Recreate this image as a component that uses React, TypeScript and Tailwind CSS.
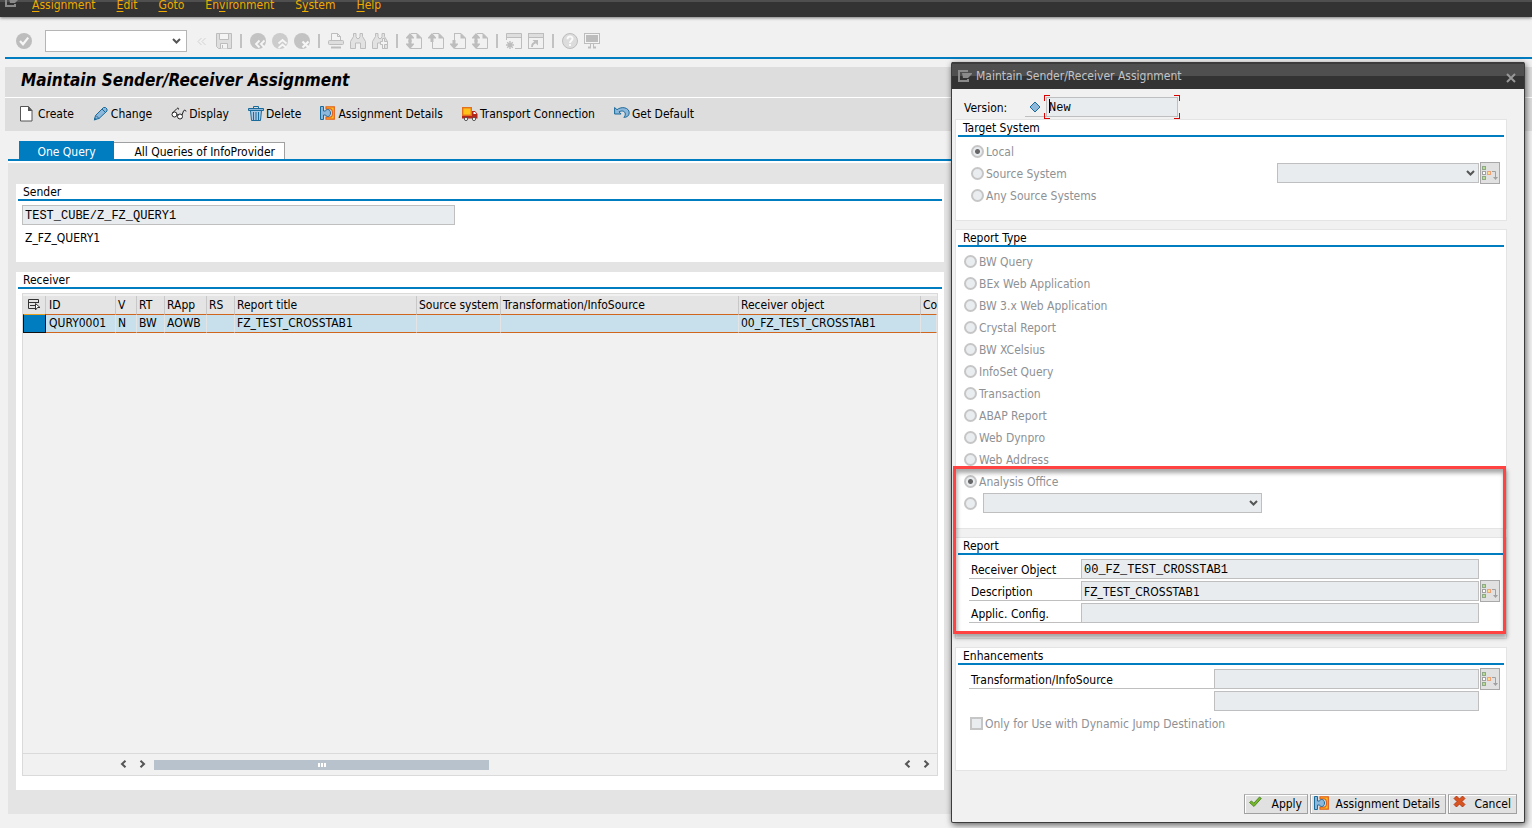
import React from "react";
import clsx from "clsx";

const MENUS = ["Assignment", "Edit", "Goto", "Environment", "System", "Help"];
const UNDERLINED = [0, 0, 0, 2, 1, 0];

const REPORT_TYPES = [
  "BW Query",
  "BEx Web Application",
  "BW 3.x Web Application",
  "Crystal Report",
  "BW XCelsius",
  "InfoSet Query",
  "Transaction",
  "ABAP Report",
  "Web Dynpro",
  "Web Address",
  "Analysis Office",
];

const COLUMNS = [
  { title: "ID", value: "QURY0001", width: "w-[70px]" },
  { title: "V", value: "N", width: "w-[21px]" },
  { title: "RT", value: "BW", width: "w-[28px]" },
  { title: "RApp", value: "AOWB", width: "w-[42px]" },
  { title: "RS", value: "", width: "w-[28px]" },
  { title: "Report title", value: "FZ_TEST_CROSSTAB1", width: "w-[182px]" },
  { title: "Source system", value: "", width: "w-[84px]" },
  { title: "Transformation/InfoSource", value: "", width: "w-[238px]" },
  { title: "Receiver object", value: "00_FZ_TEST_CROSSTAB1", width: "w-[182px]" },
  { title: "Co", value: "", width: "" },
];

const Icon = ({ children, className }: { children: React.ReactNode; className?: string }) => (
  <svg viewBox="0 0 16 16" className={clsx("w-4 h-4 shrink-0", className)} fill="none" aria-hidden="true">
    {children}
  </svg>
);

/* ---------- system toolbar icons ---------- */

const GREY = "#bdbdbd";

const CheckIcon = () => (
  <Icon>
    <circle cx="8" cy="8" r="8" fill={GREY} />
    <path d="M4 8l3 3.2 5.2-6.6" stroke="#f6f6f6" strokeWidth="2.2" />
  </Icon>
);

const SaveIcon = () => (
  <Icon>
    <path d="M.5.5h15v15H2.5l-2-2z" stroke={GREY} fill="#dedede" />
    <path d="M3.5.5h9v6h-9z" fill="#f4f4f4" stroke={GREY} />
    <path d="M4.5 15.5v-5h7v5" fill="#f4f4f4" stroke={GREY} />
    <path d="M6.5 12v3" stroke={GREY} />
  </Icon>
);

const BackIcon = () => (
  <Icon>
    <circle cx="8" cy="8" r="8" fill="#c3c3c3" />
    <path d="M9.5 7.5L6 11l3.5 3.5M14.5 7.5L11 11l3.5 3.5" stroke="#f6f6f6" strokeWidth="1.8" />
  </Icon>
);

const ExitIcon = () => (
  <Icon>
    <circle cx="8" cy="8" r="8" fill="#cccccc" />
    <path d="M6.5 10.5L10.5 7l4 3.5M6.5 15l4-3.5 4 3.5" stroke="#f6f6f6" strokeWidth="1.8" />
  </Icon>
);

const CancelCircleIcon = () => (
  <Icon>
    <circle cx="8" cy="8" r="8" fill="#c3c3c3" />
    <path d="M8.5 8.5l6 6M14.5 8.5l-6 6" stroke="#f6f6f6" strokeWidth="2.2" />
  </Icon>
);

const PrintIcon = () => (
  <Icon>
    <path d="M3.5 8V.5h6l3 3V8" fill="#f4f4f4" stroke={GREY} />
    <path d="M9.5.5v3h3" stroke={GREY} />
    <rect x=".5" y="7.5" width="15" height="4" rx="1" fill="#dedede" stroke={GREY} />
    <path d="M3 14.500h10" stroke={GREY} strokeWidth="2" />
  </Icon>
);

const FindIcon = ({ more }: { more?: boolean }) => (
  <Icon>
    <path
      d="M3.500 .5h2.500v3l1 2h2l1-2v-3h2.500v3l3 5v7h-5V10H5.500v5.500h-5v-7l3-5z"
      fill="#e2e2e2"
      stroke={GREY}
    />
    {more && (
      <path d="M10.500 5.500h2v3h3v3h-3v4h-2v-4h-2v-3h2z" fill="#f4f4f4" stroke={GREY} />
    )}
  </Icon>
);

const PageIcon = ({ up, down }: { up?: boolean; down?: boolean }) => (
  <Icon>
    <path d="M4.500 9v6.500h11V5L11 .5H5" stroke={GREY} />
    {down && !up && <path d="M4.500 0v9" stroke={GREY} />}
    <path d="M10.500 0v5.500H16z" fill={GREY} />
    {up && <path d="M4 0l4 4.500v1H5.500V9h-3V5.500H0v-1z" fill={GREY} />}
    {down && <path d="M4 16l4-4.500v-1H5.500V7h-3v3.500H0v1z" fill={GREY} />}
  </Icon>
);

const SessionIcon = () => (
  <Icon>
    <path d="M.5 7V.5h15v15H9" stroke={GREY} />
    <path d="M1 1h14v3H1z" fill="#dedede" />
    <path d="M.5 4.500h15" stroke={GREY} />
    <path d="M4 8v8M0 12h8M1.200 9.200l5.600 5.600M6.800 9.200l-5.600 5.600" stroke={GREY} strokeWidth="1.400" />
  </Icon>
);

const ShortcutIcon = () => (
  <Icon>
    <rect x=".5" y=".5" width="15" height="15" stroke={GREY} />
    <path d="M1 1h14v3H1z" fill="#dedede" />
    <path d="M.5 4.500h15" stroke={GREY} />
    <path d="M4 14c0-2.500 1-4 3.500-4.500" stroke={GREY} strokeWidth="1.800" />
    <path d="M4.500 7H10v5.500z" fill={GREY} />
  </Icon>
);

const HelpIcon = () => (
  <Icon>
    <circle cx="8" cy="8" r="7.500" fill="#dcdcdc" stroke={GREY} />
    <path d="M5.500 6.200c0-3.600 5-3.400 5-.5C10.500 7.600 8 7.800 8 10" stroke="#fafafa" strokeWidth="2" />
    <rect x="7" y="11" width="2" height="2" fill="#fafafa" />
  </Icon>
);

const MonitorIcon = () => (
  <Icon>
    <rect x=".5" y=".5" width="15" height="10" fill="#f4f4f4" stroke={GREY} />
    <rect x="2" y="2" width="12" height="7" fill={GREY} />
    <path d="M6.500 11v3M9.500 11v3" stroke={GREY} />
    <path d="M4 14.500h3M9 14.500h3" stroke={GREY} strokeWidth="2" />
  </Icon>
);

/* ---------- application toolbar icons ---------- */

const CreateIcon = () => (
  <Icon>
    <path d="M.5.5h8l3.500 4v10.500H.5z" fill="#fff" stroke="#555" />
    <path d="M8 0v5h4.500z" fill="#555" />
  </Icon>
);

const ChangeIcon = () => (
  <Icon>
    <path d="M1.500 13.500l1-4L10.500 1.500h2l1.500 1.500v2L6 12.500z" fill="#8db8dc" stroke="#1a6a9a" />
    <path d="M3 9.500l3 3M9 3l3.500 3.500" stroke="#1a6a9a" />
    <path d="M.8 14.500l.8-3 2.200 2.200z" fill="#1a6a9a" />
  </Icon>
);

const DisplayIcon = () => (
  <Icon>
    <circle cx="3.500" cy="8.500" r="2.500" stroke="#222" fill="#fff" />
    <circle cx="9" cy="10.500" r="2.500" stroke="#222" fill="#fff" />
    <path d="M5.500 8l1.500 1.500M1.500 7L6 2.500c1-.9 2-.3 1.500 1M11 9l1.500-4c.6-1.500 2.500-1 2.500.5" stroke="#222" />
  </Icon>
);

const TrashIcon = () => (
  <Icon>
    <path d="M2.500 4.500h11l-1 10h-9z" fill="#a8c8e4" stroke="#1a6a9a" />
    <path d="M.5 2.500h15v2H.5z" fill="#8db8dc" stroke="#1a6a9a" />
    <path d="M5.500 2.500v-2h5v2" stroke="#1a6a9a" />
    <path d="M5.500 6v8M8 6v8M10.500 6v8" stroke="#1a6a9a" />
  </Icon>
);

const AssignmentIcon = () => (
  <Icon>
    <path d="M6 .8h8.300v12.400H6v-2h4.200c1.500 0 2.300-2 2.300-4.200s-.8-4.200-2.300-4.200H6z" fill="#ffc21a" stroke="#e2601c" strokeWidth="1.200" />
    <path
      d="M.5.500h3v4.500h2c.3-.9 1.100-1.500 2.200-1.500 1.700 0 2.800 1.400 2.800 3.500s-1.100 3.500-2.800 3.500c-1.100 0-1.900-.6-2.200-1.500h-2v4.500h-3z"
      fill="#8db8dc"
      stroke="#1a6a9a"
    />
  </Icon>
);

const TransportIcon = () => (
  <Icon>
    <rect x=".7" y="1.700" width="8.600" height="7.600" fill="#ffc21a" stroke="#e2701c" strokeWidth="1.400" />
    <path d="M10 5h3l2.500 3v4.500H10z" fill="#b3261c" />
    <path d="M11.500 6h1.500l1.300 2h-2.800z" fill="#fff" />
    <path d="M0 10h11v2.500H0z" fill="#b3261c" />
    <circle cx="4" cy="13" r="1.600" fill="#fff" stroke="#555" />
    <circle cx="12" cy="13" r="1.600" fill="#fff" stroke="#555" />
  </Icon>
);

const UndoIcon = () => (
  <Icon>
    <path
      d="M.6 1.500v6.500h6.500L5 5.900C8 4 11.300 5.200 11.300 8c0 1.400-.5 2.400-1.500 3.300 3 .2 5.400-1.500 5.400-4.500C15.200 1.500 7.500 0 3 3.700z"
      fill="#8db8dc"
      stroke="#1a6a9a"
    />
  </Icon>
);

const ApplyIcon = () => (
  <Icon className="mb-1">
    <path d="M1.500 8.500l2-1.600 2.300 2.300L11.500 3l1.800 1.400-7.300 8.100z" fill="#76b82a" stroke="#3d7a14" strokeWidth=".8" />
  </Icon>
);

const CloseRedIcon = () => (
  <Icon className="mb-1">
    <path
      d="M2 4.500L4.500 2 7.500 5l3-3L13 4.500 10 7.500l3 3-2.500 2.500-3-3-3 3L2 10.500l3-3z"
      fill="#d9531e"
      stroke="#a8300f"
      strokeWidth=".8"
    />
  </Icon>
);

const LogoIcon = () => (
  <svg viewBox="0 0 14 12" className="w-[14px] h-3 shrink-0" fill="none" aria-hidden="true">
    <path d="M10 1H1v10h9V9" stroke="#8a8a8a" strokeWidth="2" />
    <path d="M4 3h11l-5 5H5z" fill="#8a8a8a" />
  </svg>
);

const Chevron = ({ className }: { className?: string }) => (
  <svg
    viewBox="0 0 9 6"
    className={clsx("absolute top-1/2 -translate-y-1/2 w-[9px] h-[6px] pointer-events-none", className)}
    fill="none"
    aria-hidden="true"
  >
    <path d="M1 1l3.500 3.500L8 1" stroke="#555" strokeWidth="2" />
  </svg>
);

/* ---------- controls ---------- */

const ToolButton = ({ label, children }: { label: string; children: React.ReactNode }) => (
  <button type="button" aria-label={label} className="shrink-0">
    {children}
  </button>
);

const Separator = () => <span className="w-[2px] h-[14px] mx-[2px] bg-[#c2c2c2]" aria-hidden="true" />;

const AppButton = ({ label, icon }: { label: string; icon: React.ReactNode }) => (
  <button type="button" className="flex items-center gap-[2px] whitespace-nowrap">
    {icon}
    {label}
  </button>
);

const FooterButton = ({ label, icon, className }: { label: string; icon: React.ReactNode; className: string }) => (
  <button
    type="button"
    className={clsx(
      "h-5 pl-[3px] pr-[5px] flex items-center justify-between border border-[#a0a0a0] border-t-[#b8b8b8] bg-[#e1e1e1] shadow-[inset_1px_1px_0_#fff] whitespace-nowrap",
      className,
    )}
  >
    {icon}
    {label}
  </button>
);

const Radio = ({ label, name, checked }: { label: string; name: string; checked?: boolean }) => (
  <label className="h-[22px] flex items-center gap-[2px] text-[#8e9194]">
    <input
      type="radio"
      name={name}
      defaultChecked={checked}
      disabled
      className="appearance-none w-[13px] h-[13px] rounded-full border-2 border-[#c6c6c6] bg-[#e9edf0] checked:bg-[radial-gradient(circle,#666_2px,#e9edf0_3px)]"
    />
    <span className="pt-[2px]">{label}</span>
  </label>
);

const Field = ({ className, ...props }: React.InputHTMLAttributes<HTMLInputElement>) => (
  <input
    type="text"
    readOnly
    className={clsx("h-5 px-[2px] pt-[2px] min-w-0 border border-[#bfbfbf] bg-[#e8ecef] text-black outline-none", className)}
    {...props}
  />
);

const DisabledSelect = ({ label, className }: { label: string; className: string }) => (
  <div className={clsx("relative h-5", className)}>
    <select
      aria-label={label}
      disabled
      className="block appearance-none w-full h-5 border border-[#bfbfbf] bg-[#e8ecef] opacity-100"
    />
    <Chevron className="right-1" />
  </div>
);

const MultiButton = ({ label }: { label: string }) => (
  <button
    type="button"
    aria-label={label}
    className="w-5 h-[22px] shrink-0 border border-[#a8a8a8] bg-[#e1e1e1] flex items-center justify-center"
  >
    <svg viewBox="0 0 18 16" className="w-[18px] h-4" fill="none" aria-hidden="true">
      <rect x="1.500" y="1.500" width="3" height="3" fill="#b5dc8c" stroke="#8fa88a" />
      <rect x="1.500" y="6.500" width="3" height="3" fill="#fff" stroke="#a0a0a0" />
      <rect x="1.500" y="11.500" width="3" height="3" fill="#b5dc8c" stroke="#8fa88a" />
      <rect x="6.500" y="6.500" width="3" height="3" fill="#ffe08a" stroke="#eea27a" />
      <path d="M11 6.500h3.500V13" stroke="#a0a0a0" />
      <path d="M12 12h5l-2.500 3z" fill="#a0a0a0" />
    </svg>
  </button>
);

const Group = ({ title, children }: { title: string; children: React.ReactNode }) => (
  <section className="bg-white border border-[#e4e4e4]">
    <h3 className="mx-[2px] px-[5px] h-[17px] leading-[17px] border-b-2 border-[#007cc0]">{title}</h3>
    <div className="pt-[3px] pb-[14px] pl-2 pr-[6px]">{children}</div>
  </section>
);

const ReportRow = ({ id, label, children }: { id: string; label: string; children: React.ReactNode }) => (
  <div className="h-[22px] ml-[5px] flex items-center">
    <label htmlFor={id} className="w-[112px] h-5 shrink-0 px-[2px] pt-[3px] border-b border-[#bfbfbf]">
      {label}
    </label>
    {children}
  </div>
);

/* ---------- main screen ---------- */

const MenuBar = () => (
  <nav className="h-[17px] shrink-0 pl-[5px] flex items-start bg-[linear-gradient(#4f4f4f_2px,#333_2px)] text-[#f0ab00] shadow-[0_1px_3px_rgba(0,0,0,0.5)]">
    <span className="flex h-[7px] items-end overflow-hidden">
      <LogoIcon />
    </span>
    <div className="pl-[13px] flex gap-[21px]">
      {MENUS.map((menu, i) => (
        <button type="button" key={menu} className="leading-[10px]">
          {menu.slice(0, UNDERLINED[i])}
          <span className="underline underline-offset-2">{menu[UNDERLINED[i]]}</span>
          {menu.slice(UNDERLINED[i] + 1)}
        </button>
      ))}
    </div>
  </nav>
);

const SystemToolbar = () => (
  <div className="ml-[5px] h-[42px] shrink-0 pl-[11px] pt-2 flex items-center gap-[6px] border-b-2 border-[#007cc0]">
    <ToolButton label="Enter">
      <CheckIcon />
    </ToolButton>
    <div className="relative ml-[7px] mr-1">
      <input
        type="text"
        aria-label="Command"
        className="block w-[142px] h-[22px] px-1 border border-[#b5b5b5] bg-white outline-none"
      />
      <Chevron className="right-[6px]" />
    </div>
    <ToolButton label="Collapse command field">
      <svg viewBox="0 0 9 16" className="w-[9px] h-4 mr-1" fill="none" aria-hidden="true">
        <path d="M4.500 5L1 8.500 4.500 12M8.500 5L5 8.500 8.500 12" stroke="#d2d2d2" />
      </svg>
    </ToolButton>
    <ToolButton label="Save"><SaveIcon /></ToolButton>
    <Separator />
    <ToolButton label="Back"><BackIcon /></ToolButton>
    <ToolButton label="Exit"><ExitIcon /></ToolButton>
    <ToolButton label="Cancel"><CancelCircleIcon /></ToolButton>
    <Separator />
    <ToolButton label="Print"><PrintIcon /></ToolButton>
    <ToolButton label="Find"><FindIcon /></ToolButton>
    <ToolButton label="Find next"><FindIcon more /></ToolButton>
    <Separator />
    <ToolButton label="First page"><PageIcon up down /></ToolButton>
    <ToolButton label="Previous page"><PageIcon up /></ToolButton>
    <ToolButton label="Next page"><PageIcon down /></ToolButton>
    <ToolButton label="Last page"><PageIcon up down /></ToolButton>
    <Separator />
    <ToolButton label="New session"><SessionIcon /></ToolButton>
    <ToolButton label="Create shortcut"><ShortcutIcon /></ToolButton>
    <Separator />
    <ToolButton label="Help"><HelpIcon /></ToolButton>
    <ToolButton label="Customize layout"><MonitorIcon /></ToolButton>
  </div>
);

const Panel = ({ title, className, children }: { title: string; className?: string; children: React.ReactNode }) => (
  <section className={clsx("bg-white flex flex-col", className)}>
    <h2 className="mx-[2px] px-[5px] h-[17px] shrink-0 leading-[17px] border-b-2 border-[#007cc0]">{title}</h2>
    {children}
  </section>
);

const ScrollArrow = ({ label, right }: { label: string; right?: boolean }) => (
  <button type="button" aria-label={label} className="w-[7px] h-4 pb-px flex items-center">
    <svg viewBox="0 0 7 8" className="w-[7px] h-2" fill="none" aria-hidden="true">
      <path d={right ? "M1.500 .7L5 4 1.500 7.300" : "M5.500 .7L2 4l3.500 3.300"} stroke="#555" strokeWidth="2" />
    </svg>
  </button>
);

const ReceiverTable = () => (
  <div className="mx-[6px] mt-1 mb-[14px] flex-1 flex flex-col border border-[#dadada] bg-[#f1f1f1]">
    <div className="flex-1 pt-[2px]">
      <table className="w-full table-fixed border-separate border-spacing-0 text-left">
        <thead>
          <tr className="h-[18px] bg-[#e4e4e4]">
            <th className="w-[23px] p-0 border-r border-[#c8c8c8]">
              <svg viewBox="0 0 13 12" className="w-[13px] h-3 mx-auto" fill="none" aria-label="Select all">
                <path d="M10.500 4V.5H.5v9H7M.5 3.500h10M2 6.500h5" stroke="#333" />
                <path d="M7.500 4.500l4.500 4H9.500l-2 2.500z" fill="#fff" stroke="#333" />
              </svg>
            </th>
            {COLUMNS.map((col, i) => (
              <th
                key={col.title}
                className={clsx(
                  "py-0 pr-0 leading-[17px] font-normal whitespace-nowrap border-[#c8c8c8]",
                  i === 0 ? "pl-[3px]" : "pl-[2px]",
                  i < COLUMNS.length - 1 && "border-r",
                  col.width,
                )}
              >
                {col.title}
              </th>
            ))}
          </tr>
        </thead>
        <tbody>
          <tr className="h-[19px] bg-[#c8e0ec]">
            <td className="p-0 bg-[#007cc0] border border-[#111] border-t-[#e8a020]" />
            {COLUMNS.map((col, i) => (
              <td
                key={col.title}
                className={clsx(
                  "py-0 pr-0 leading-[17px] whitespace-nowrap border-y border-y-[#d0661e] border-r border-r-[#e4e4e4]",
                  i === 0 ? "pl-[3px]" : "pl-[2px]",
                )}
              >
                {col.value}
              </td>
            ))}
          </tr>
        </tbody>
      </table>
    </div>
    <div className="h-[22px] pl-[97px] pr-[7px] flex items-center border-t border-[#dadada]">
      <ScrollArrow label="Scroll left" />
      <span className="w-3" />
      <ScrollArrow label="Scroll right" right />
      <div className="ml-2 h-[10px] w-[335px] bg-[#b8c2cc] flex items-center justify-center gap-px">
        <span className="w-[2px] h-1 bg-white" />
        <span className="w-[2px] h-1 bg-white" />
        <span className="w-[2px] h-1 bg-white" />
      </div>
      <span className="flex-1" />
      <ScrollArrow label="Scroll left one column" />
      <span className="w-3" />
      <ScrollArrow label="Scroll right one column" right />
    </div>
  </div>
);

/* ---------- dialog ---------- */

const AssignmentDialog = () => (
  <div
    role="dialog"
    aria-labelledby="dialog-title"
    className="absolute right-[7px] top-[62px] w-[574px] flex flex-col border-x border-b border-[#3c3c3c] rounded-[2px] bg-[#f1f1f1] shadow-[1px_2px_6px_rgba(0,0,0,0.6)]"
  >
    <header className="h-[27px] pl-[6px] pr-2 pb-[2px] flex items-center justify-between border-t-2 border-[#3c3c3c] bg-[linear-gradient(#4f4f4f_12px,#333_12px)]">
      <div className="flex items-center gap-1 text-[#c4c4c4]">
        <LogoIcon />
        <h2 id="dialog-title">Maintain Sender/Receiver Assignment</h2>
      </div>
      <button type="button" aria-label="Close">
        <svg viewBox="0 0 10 10" className="w-[10px] h-[10px] mt-1" fill="none" aria-hidden="true">
          <path d="M1 1l8 8M9 1L1 9" stroke="#999" strokeWidth="2" />
        </svg>
      </button>
    </header>

    <div className="pl-[3px] pr-[17px] pt-2">
      <div className="pl-[9px] pb-[2px] flex items-center">
        <label htmlFor="version" className="w-[61px] pt-[2px]">
          Version:
        </label>
        <span className="w-[21px] h-5 pr-px flex items-center justify-center border-b border-[#bfbfbf]">
          <svg viewBox="0 0 12 12" className="w-3 h-3" aria-hidden="true">
            <path d="M6 1l5 5-5 5-5-5z" fill="#8db8dc" stroke="#1a6a9a" />
          </svg>
        </span>
        <div className="relative">
          <Field id="version" defaultValue="New" className="block w-[132px] font-['Liberation_Mono',monospace]" />
          <span className="absolute left-[3px] top-[2px] h-[14px] w-px bg-black" />
          <span className="absolute -left-[2px] -top-[2px] w-[6px] h-[6px] border-l border-t border-[#d00]" />
          <span className="absolute -right-[2px] -top-[2px] w-[6px] h-[6px] border-r border-t border-[#d00]" />
          <span className="absolute -left-[2px] -bottom-[2px] w-[6px] h-[6px] border-l border-b border-[#d00]" />
          <span className="absolute -right-[2px] -bottom-[2px] w-[6px] h-[6px] border-r border-b border-[#d00]" />
        </div>
      </div>

      <div className="flex flex-col gap-2">
        <Group title="Target System">
          <div className="pl-[7px]">
            <Radio name="target" label="Local" checked />
            <div className="flex items-center justify-between">
              <Radio name="target" label="Source System" />
              <div className="flex items-center gap-px">
                <DisabledSelect label="Source system" className="w-[202px]" />
                <MultiButton label="Choose source system" />
              </div>
            </div>
            <Radio name="target" label="Any Source Systems" />
          </div>
        </Group>

        <Group title="Report Type">
          {REPORT_TYPES.map((type) => (
            <Radio key={type} name="type" label={type} checked={type === "Analysis Office"} />
          ))}
          <div className="flex items-center gap-1">
            <Radio name="type" label="" />
            <DisabledSelect label="Other report type" className="w-[279px]" />
          </div>
        </Group>

        <Group title="Report">
          <ReportRow id="receiver" label="Receiver Object">
            <Field
              id="receiver"
              defaultValue="00_FZ_TEST_CROSSTAB1"
              className="flex-1 mr-[21px] font-['Liberation_Mono',monospace]"
            />
          </ReportRow>
          <ReportRow id="description" label="Description">
            <Field id="description" defaultValue="FZ_TEST_CROSSTAB1" className="flex-1 mr-px" />
            <MultiButton label="Description details" />
          </ReportRow>
          <ReportRow id="config" label="Applic. Config.">
            <Field id="config" className="flex-1 mr-[21px]" />
          </ReportRow>
        </Group>

        <Group title="Enhancements">
          <div className="h-[22px] ml-[5px] flex items-center">
            <label
              htmlFor="transformation"
              className="flex-1 h-5 px-[2px] pt-[3px] border-b border-[#bfbfbf]"
            >
              Transformation/InfoSource
            </label>
            <Field id="transformation" className="w-[265px] mr-px" />
            <MultiButton label="Choose transformation" />
          </div>
          <div className="h-[22px] flex items-center justify-end">
            <Field aria-label="Transformation text" className="w-[265px] mr-[21px]" />
          </div>
          <label className="h-[22px] mb-[22px] ml-[6px] flex items-center gap-[2px] text-[#8e9194]">
            <input
              type="checkbox"
              disabled
              className="appearance-none w-[13px] h-[13px] border-2 border-[#c6c6c6] bg-[#e9edf0]"
            />
            <span className="pt-[2px]">Only for Use with Dynamic Jump Destination</span>
          </label>
        </Group>
      </div>
    </div>

    <footer className="mt-[23px] mb-2 pr-[7px] flex justify-end gap-[2px]">
      <FooterButton label="Apply" icon={<ApplyIcon />} className="w-16" />
      <FooterButton label="Assignment Details" icon={<AssignmentIcon />} className="w-[136px]" />
      <FooterButton label="Cancel" icon={<CloseRedIcon />} className="w-[69px]" />
    </footer>

    {/* highlight over the report settings */}
    <div className="absolute left-px right-[18px] top-[404px] h-[168px] border-[3px] border-[#ff4343] pointer-events-none shadow-[1px_4px_4px_rgba(0,0,0,0.35),inset_1px_4px_4px_rgba(0,0,0,0.35)]" />
  </div>
);

export default function App() {
  return (
    <div className="relative min-h-screen flex flex-col bg-[#f1f1f1] text-black text-[12px] leading-4 font-['DejaVu_Sans_Condensed','DejaVu_Sans',sans-serif]">
      <MenuBar />
      <SystemToolbar />

      <div className="ml-[5px] mt-2 bg-[#ddd]">
        <h1 className="h-[31px] pl-4 leading-[27px] border-b border-white text-[17px] font-bold italic">
          Maintain Sender/Receiver Assignment
        </h1>
        <div className="h-[33px] pl-[15px] pb-[2px] flex items-center gap-[19px]">
          <AppButton label="Create" icon={<CreateIcon />} />
          <AppButton label="Change" icon={<ChangeIcon />} />
          <AppButton label="Display" icon={<DisplayIcon />} />
          <AppButton label="Delete" icon={<TrashIcon />} />
          <AppButton label="Assignment Details" icon={<AssignmentIcon />} />
          <AppButton label="Transport Connection" icon={<TransportIcon />} />
          <AppButton label="Get Default" icon={<UndoIcon />} />
        </div>
      </div>

      <main className="flex-1 ml-2 mr-[576px] mt-[10px] mb-[14px] flex flex-col">
        <div role="tablist" className="pl-[11px] flex items-end border-b-2 border-[#007cc0]">
          <button type="button" role="tab" aria-selected="true" className="w-[95px] h-[18px] pt-[3px] leading-4 bg-[#007cc0] text-white">
            One Query
          </button>
          <button
            type="button"
            role="tab"
            aria-selected="false"
            className="w-[171px] h-[17px] pt-px pr-[9px] leading-4 text-right bg-white border-t border-r border-[#a0a0a0]"
          >
            All Queries of InfoProvider
          </button>
        </div>
        <div className="flex-1 pt-[21px] pb-6 pl-2 pr-3 flex flex-col gap-[10px] bg-[#e4e4e4] border-t-2 border-white">
          <Panel title="Sender" className="h-[78px]">
            <Field
              aria-label="Sender"
              defaultValue="TEST_CUBE/Z_FZ_QUERY1"
              className="w-[433px] mt-1 ml-[6px] font-['Liberation_Mono',monospace]"
            />
            <p className="mt-[5px] ml-[9px]">Z_FZ_QUERY1</p>
          </Panel>
          <Panel title="Receiver" className="flex-1">
            <ReceiverTable />
          </Panel>
        </div>
      </main>

      <AssignmentDialog />
    </div>
  );
}
